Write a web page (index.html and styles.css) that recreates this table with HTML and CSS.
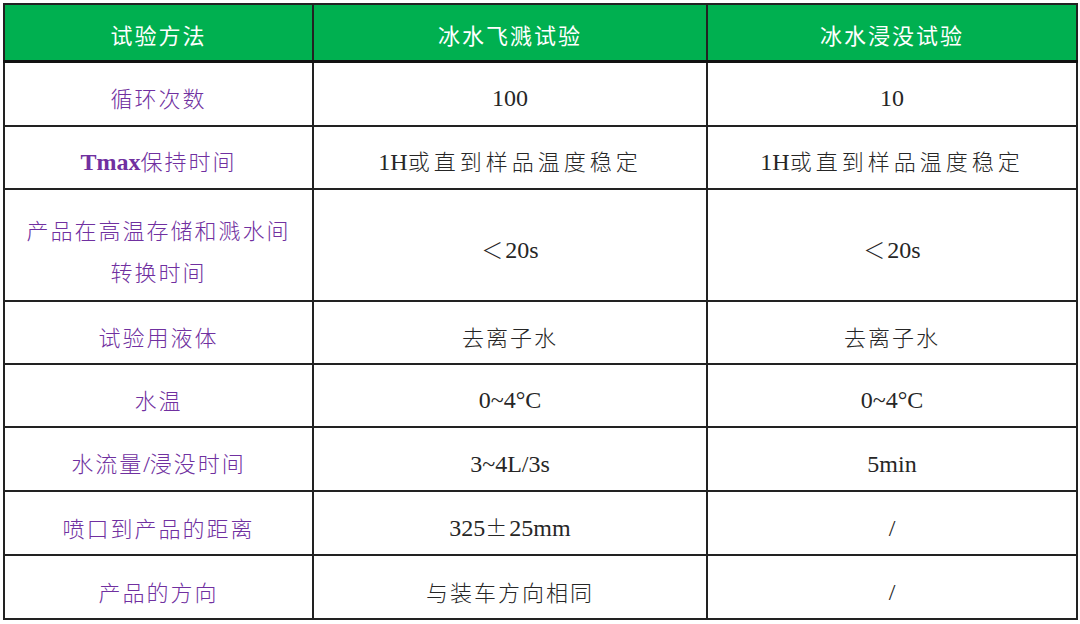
FILE: index.html
```html
<!DOCTYPE html>
<html lang="zh-CN">
<head>
<meta charset="utf-8">
<title>冰水试验</title>
<link rel="stylesheet" href="styles.css">
</head>
<body>
<table class="spec">
  <colgroup>
    <col class="c1"><col class="c2"><col class="c3">
  </colgroup>
  <thead>
    <tr class="head">
      <th>试验方法</th>
      <th>冰水飞溅试验</th>
      <th>冰水浸没试验</th>
    </tr>
  </thead>
  <tbody>
    <tr class="r65">
      <td class="label">循环次数</td>
      <td><span class="en">100</span></td>
      <td><span class="en">10</span></td>
    </tr>
    <tr class="r63">
      <td class="label"><span class="en bold">Tmax</span>保持时间</td>
      <td class="wide"><span class="en">1H</span>或直到样品温度稳定</td>
      <td class="wide"><span class="en">1H</span>或直到样品温度稳定</td>
    </tr>
    <tr class="r112">
      <td class="label two">产品在高温存储和溅水间<br>转换时间</td>
      <td>＜<span class="en">20s</span></td>
      <td>＜<span class="en">20s</span></td>
    </tr>
    <tr class="r63">
      <td class="label">试验用液体</td>
      <td>去离子水</td>
      <td>去离子水</td>
    </tr>
    <tr class="r63">
      <td class="label">水温</td>
      <td><span class="en">0~4°C</span></td>
      <td><span class="en">0~4°C</span></td>
    </tr>
    <tr class="r64">
      <td class="label">水流量<span class="en">/</span>浸没时间</td>
      <td><span class="en">3~4L/3s</span></td>
      <td><span class="en">5min</span></td>
    </tr>
    <tr class="r64">
      <td class="label">喷口到产品的距离</td>
      <td><span class="en">325</span>±<span class="en">25mm</span></td>
      <td><span class="en">/</span></td>
    </tr>
    <tr class="r64">
      <td class="label">产品的方向</td>
      <td>与装车方向相同</td>
      <td><span class="en">/</span></td>
    </tr>
  </tbody>
</table>
</body>
</html>
```

FILE: styles.css
```css
html, body {
  margin: 0;
  padding: 0;
  background: #ffffff;
}

body {
  padding: 3px 0 0 3px;
}

.spec {
  width: 1073px;
  border-collapse: collapse;
  table-layout: fixed;
  font-family: "Noto Sans CJK SC", "Liberation Serif", serif;
  font-weight: 300;
  font-size: 22px;
  letter-spacing: 2px;
  color: #262626;
  border: 2px solid #333;
}

.c1 { width: 309px; }
.c2 { width: 394px; }
.c3 { width: 370px; }

.spec th,
.spec td {
  border: 2px solid #222;
  text-align: center;
  vertical-align: middle;
  padding: 7px 0 0 0;
  line-height: 30px;
  box-sizing: border-box;
}

.spec th {
  background: #00b050;
  color: #ffffff;
  font-weight: 400;
  height: 57px;
  padding-top: 4px;
}

.head th {
  border-bottom: 3px solid #111;
}

.r65 td { height: 65px; }
.r63 td { height: 63px; }
.r64 td { height: 64px; }
.r112 td { height: 112px; }

.label {
  color: #7030a0;
}

.spec td.two {
  line-height: 42px;
  padding-top: 10px;
}

.spec td.wide {
  letter-spacing: 4px;
}

.en {
  font-family: "Liberation Serif", serif;
  font-weight: 400;
  font-size: 24px;
  letter-spacing: 0;
}

.en.bold {
  font-weight: 700;
}
```
